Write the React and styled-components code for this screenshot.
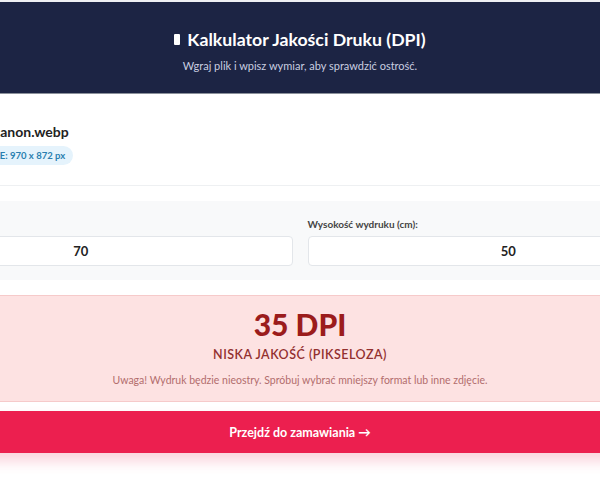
import React from "react";
import styled, { createGlobalStyle } from "styled-components";

const GlobalStyle = createGlobalStyle`
  * {
    box-sizing: border-box;
  }
  body {
    margin: 0;
    background: #eef0f3;
    font-family: Lato, "Open Sans", sans-serif;
  }
`;

const Page = styled.div`
  display: flex;
  justify-content: center;
  overflow: hidden;
  width: 100%;
  padding-top: 2px;
  min-height: 480px;
`;

const Card = styled.div`
  flex-shrink: 0;
  width: 900px;
  background: #fff;
`;

const Header = styled.header`
  background: #1c2444;
  color: #fff;
  height: 92px;
  padding-top: 5px;
  border-bottom: 1px solid #8b919b;
  display: flex;
  flex-direction: column;
  align-items: center;
  justify-content: center;
  gap: 9px;
`;

const Title = styled.h1`
  margin: 0;
  font-size: 17.7px;
  font-weight: 700;
  display: flex;
  align-items: center;
  gap: 7px;
`;

const TitleMark = styled.span`
  display: inline-block;
  width: 6px;
  height: 11px;
  background: #fff;
  border-radius: 1px;
`;

const Subtitle = styled.p`
  margin: 0;
  font-size: 11px;
  color: #c9cee0;
`;

const FileRow = styled.div`
  display: flex;
  align-items: center;
  gap: 15px;
  padding: 27px 30px 19px;
  border-bottom: 1px solid #eef0f2;
`;

const Thumb = styled.div`
  width: 66px;
  height: 45px;
  border-radius: 6px;
  background: #d9dde3;
`;

const FileInfo = styled.div`
  display: flex;
  flex-direction: column;
  align-items: flex-start;
  gap: 6px;
`;

const FileName = styled.div`
  font-size: 14px;
  font-weight: 700;
  color: #222;
`;

const Badge = styled.span`
  background: #e5f3fc;
  color: #2a7fb0;
  font-size: 9.5px;
  font-weight: 700;
  padding: 4px 8px;
  border-radius: 10px;
`;

const Inputs = styled.div`
  margin-top: 15px;
  background: #f8f9fa;
  padding: 17px 30px 14px;
  display: grid;
  grid-template-columns: 1fr 1fr;
  gap: 15px;
`;

const Field = styled.label`
  display: flex;
  flex-direction: column;
  gap: 6px;
`;

const FieldLabel = styled.span`
  font-size: 10px;
  font-weight: 700;
  color: #444;
`;

const NumberInput = styled.input`
  height: 30px;
  border: 1px solid #e3e6ea;
  border-radius: 4px;
  background: #fff;
  text-align: center;
  font-family: inherit;
  font-size: 13px;
  font-weight: 700;
  color: #222;
  padding: 0 0 0 4px;
  outline: none;
`;

const Result = styled.div`
  margin-top: 15px;
  background: #fde2e2;
  border: 1px solid #f6caca;
  height: 107px;
  display: flex;
  flex-direction: column;
  align-items: center;
  padding-top: 10px;
`;

const Dpi = styled.div`
  font-size: 30px;
  font-weight: 900;
  color: #9b1c1c;
  line-height: 36px;
`;

const Quality = styled.div`
  margin-top: 5px;
  font-size: 12.5px;
  font-weight: 600;
  color: #93302f;
  letter-spacing: 0.5px;
`;

const Note = styled.div`
  margin-top: 12px;
  font-size: 10.5px;
  color: #b26d6d;
`;

const OrderButton = styled.button`
  display: block;
  width: 100%;
  margin-top: 9px;
  height: 42px;
  border: none;
  background: #ec1f4f;
  color: #fff;
  font-family: inherit;
  font-size: 12.5px;
  font-weight: 700;
  box-shadow: 0 8px 14px rgba(236, 31, 79, 0.2);
`;

export default function App() {
  return (
    <>
      <GlobalStyle />
      <Page>
        <Card>
          <Header>
            <Title>
              <TitleMark />
              Kalkulator Jakości Druku (DPI)
            </Title>
            <Subtitle>Wgraj plik i wpisz wymiar, aby sprawdzić ostrość.</Subtitle>
          </Header>

          <FileRow>
            <Thumb />
            <FileInfo>
              <FileName>foto_canon.webp</FileName>
              <Badge>PIKSELE: 970 x 872 px</Badge>
            </FileInfo>
          </FileRow>

          <Inputs>
            <Field>
              <FieldLabel>Szerokość wydruku (cm):</FieldLabel>
              <NumberInput type="number" defaultValue={70} />
            </Field>
            <Field>
              <FieldLabel>Wysokość wydruku (cm):</FieldLabel>
              <NumberInput type="number" defaultValue={50} />
            </Field>
          </Inputs>

          <Result>
            <Dpi>35 DPI</Dpi>
            <Quality>NISKA JAKOŚĆ (PIKSELOZA)</Quality>
            <Note>Uwaga! Wydruk będzie nieostry. Spróbuj wybrać mniejszy format lub inne zdjęcie.</Note>
          </Result>

          <OrderButton>Przejdź do zamawiania →</OrderButton>
        </Card>
      </Page>
    </>
  );
}
